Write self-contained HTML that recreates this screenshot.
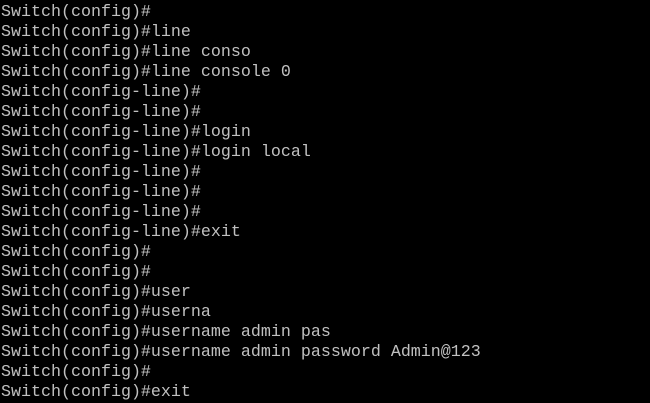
<!DOCTYPE html>
<html><head><style>
html,body{margin:0;padding:0;background:#000;width:650px;height:403px;overflow:hidden}
pre{margin:0;padding:3px 0 0 1px;font-family:"Liberation Mono",monospace;font-size:16.67px;line-height:20px;color:#c0c0c0}
</style></head><body><pre>Switch(config)#
Switch(config)#line
Switch(config)#line conso
Switch(config)#line console 0
Switch(config-line)#
Switch(config-line)#
Switch(config-line)#login
Switch(config-line)#login local
Switch(config-line)#
Switch(config-line)#
Switch(config-line)#
Switch(config-line)#exit
Switch(config)#
Switch(config)#
Switch(config)#user
Switch(config)#userna
Switch(config)#username admin pas
Switch(config)#username admin password Admin@123
Switch(config)#
Switch(config)#exit</pre></body></html>
